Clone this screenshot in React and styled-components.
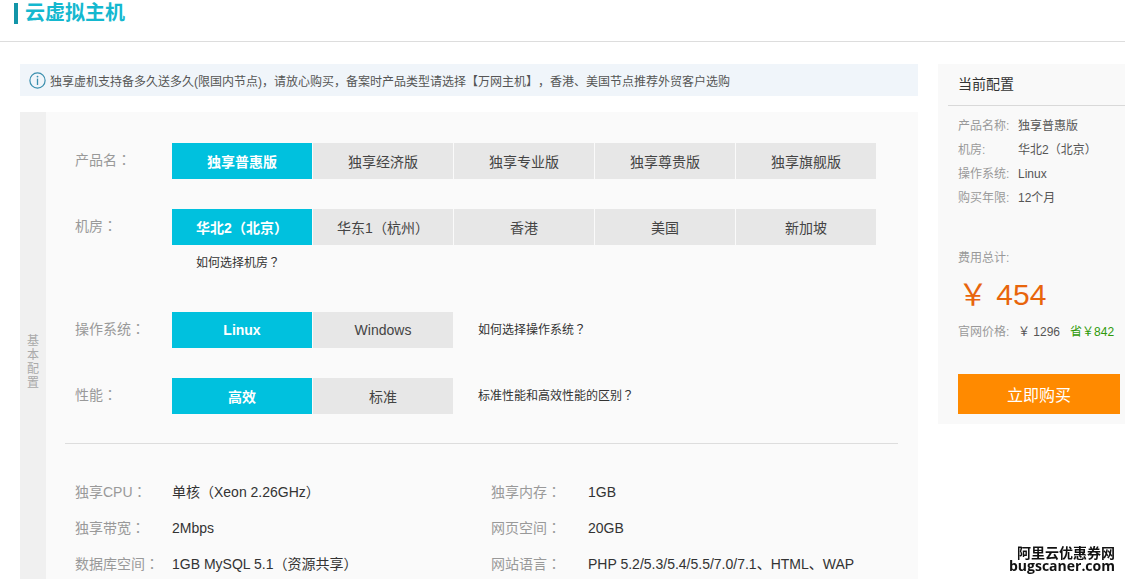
import React, { useState } from "react";
import styled, { createGlobalStyle } from "styled-components";

const GlobalStyle = createGlobalStyle`
  * {
    box-sizing: border-box;
  }

  body {
    margin: 0;
    background: #ffffff;
    color: #333333;
    font-family: "Liberation Sans", "Noto Sans CJK SC", sans-serif;
    font-size: 14px;
    text-spacing-trim: space-all;
  }

  button {
    font-family: inherit;
    cursor: pointer;
  }
`;

const Header = styled.header`
  display: flex;
  align-items: flex-start;
  height: 42px;
  padding: 3px 14px 0;
  border-bottom: 1px solid #dddddd;
`;

const Title = styled.h1`
  margin: 0;
  padding-left: 7px;
  border-left: 4px solid #1295a8;
  color: #14b8cf;
  font-size: 20px;
  font-weight: bold;
  line-height: 21px;
`;

const Page = styled.div`
  display: flex;
  align-items: flex-start;
  gap: 20px;
  padding: 22px 0 0 20px;
`;

const Main = styled.main`
  flex: 1;
  min-width: 0;
`;

const Notice = styled.div`
  display: flex;
  align-items: center;
  gap: 4px;
  height: 32px;
  margin-bottom: 16px;
  padding: 0 9px;
  background: #f0f5fa;
  color: #555555;
  font-size: 12px;
`;

const Panel = styled.section`
  display: flex;
  background: #fafafa;
`;

const Rail = styled.h2`
  display: flex;
  align-items: center;
  justify-content: center;
  width: 26px;
  margin: 0;
  padding: 0 7px;
  background: #f0f0f0;
  color: #aaaaaa;
  font-size: 12px;
  font-weight: normal;
  line-height: 14px;
`;

const PanelBody = styled.div`
  flex: 1;
  padding: 31px 20px 30px 19px;
`;

const Options = styled.div`
  display: flex;
  flex-direction: column;
  gap: 30px;
  padding: 0 10px 29px;
  border-bottom: 1px solid #dddddd;
`;

const OptionRow = styled.div`
  display: flex;
`;

const Label = styled.span`
  flex: none;
  width: ${(props) => props.$width || 97}px;
  color: #999999;
  line-height: ${(props) => props.$line || 36}px;
`;

// the TC face keeps full-width marks in the middle of their cell
const Mark = styled.span`
  font-family: "Noto Sans CJK TC", sans-serif;
  line-height: 1;
`;

const ButtonGroup = styled.div`
  display: flex;
  gap: 1px;
`;

const OptionButton = styled.button`
  width: 140px;
  height: 36px;
  padding: 0;
  border: 0;
  background: ${(props) => (props.$active ? "#00c1de" : "#e7e7e7")};
  color: ${(props) => (props.$active ? "#ffffff" : "#444444")};
  font-size: 14px;
  font-weight: ${(props) => (props.$active ? "bold" : "normal")};
`;

const HelpLink = styled.a`
  display: block;
  padding-left: ${(props) => (props.$below ? 24 : 25)}px;
  color: #333333;
  font-size: 12px;
  line-height: ${(props) => (props.$below ? 37 : 36)}px;
  text-decoration: none;
`;

const Specs = styled.dl`
  display: grid;
  grid-template-columns: 1fr 1fr;
  column-gap: 9px;
  margin: 0;
  padding: 30px 0 0 10px;
  line-height: 36px;
`;

const Spec = styled.div`
  display: flex;
`;

const Value = styled.dd`
  margin: 0;
  white-space: nowrap;
`;

const Aside = styled.aside`
  flex: none;
  width: 187px;
  padding: 0 0 10px 10px;
  background: #f9f9f9;
  font-size: 12px;
`;

const AsideTitle = styled.h2`
  margin: 0 0 8px;
  padding-left: 10px;
  border-bottom: 1px solid #d9d9d9;
  font-size: 14px;
  font-weight: normal;
  line-height: 41px;
`;

const Summary = styled.dl`
  margin: 0 0 36px;
  padding-left: 10px;
  color: #555555;
  line-height: 24px;
`;

const Cost = styled.div`
  padding: 0 5px 0 10px;
  color: #555555;
  line-height: 24px;
`;

const Muted = styled.span`
  color: #999999;
`;

const Price = styled.div`
  color: #e8650c;
  font-size: 30px;
  line-height: 50px;
`;

const OfficialPrice = styled.div`
  display: flex;
  white-space: nowrap;
`;

const Saved = styled.span`
  margin-left: 10px;
  color: #2f9a0a;
`;

const BuyButton = styled.button`
  width: 100%;
  height: 40px;
  margin-top: 30px;
  border: 0;
  background: #ff8a00;
  color: #ffffff;
  font-size: 16px;
`;

const Watermark = styled.div`
  display: flex;
  flex-direction: column;
  align-items: flex-end;
  position: fixed;
  right: 10px;
  bottom: 7px;
  color: #111111;
  font-size: 14px;
  font-weight: bold;
`;

const WatermarkName = styled.span`
  font-family: "Noto Sans CJK SC", sans-serif;
  line-height: 16px;
`;

const WatermarkSite = styled.span`
  font-family: "Open Sans", sans-serif;
  line-height: 12px;
`;

const GROUPS = [
  {
    name: "产品名",
    options: ["独享普惠版", "独享经济版", "独享专业版", "独享尊贵版", "独享旗舰版"],
  },
  {
    name: "机房",
    options: ["华北2（北京）", "华东1（杭州）", "香港", "美国", "新加坡"],
    help: "如何选择机房",
    below: true,
  },
  { name: "操作系统", options: ["Linux", "Windows"], help: "如何选择操作系统" },
  { name: "性能", options: ["高效", "标准"], help: "标准性能和高效性能的区别" },
];

const SPECS = [
  ["独享CPU", "单核（Xeon 2.26GHz）"],
  ["独享内存", "1GB"],
  ["独享带宽", "2Mbps"],
  ["网页空间", "20GB"],
  ["数据库空间", "1GB MySQL 5.1（资源共享）"],
  ["网站语言", "PHP 5.2/5.3/5.4/5.5/7.0/7.1、HTML、WAP"],
];

const InfoIcon = () => (
  <svg width="17" height="17" viewBox="0 0 17 17" fill="none" aria-hidden="true">
    <circle cx="8.5" cy="8.5" r="7.6" stroke="#3a8fae" strokeWidth="1.2" />
    <path d="M8.5 6.6v6.4" stroke="#3a8fae" strokeWidth="1.3" />
    <circle cx="8.5" cy="4.6" r="0.9" fill="#3a8fae" />
  </svg>
);

const OptionGroup = ({ group, selected, onSelect }) => {
  const help = group.help && (
    <HelpLink href="#help" $below={group.below}>
      {group.help}
      <Mark>？</Mark>
    </HelpLink>
  );
  return (
    <OptionRow role="group" aria-label={group.name}>
      <Label $line={34}>
        {group.name}
        <Mark>：</Mark>
      </Label>
      <div>
        <ButtonGroup>
          {group.options.map((option) => (
            <OptionButton
              key={option}
              type="button"
              $active={option === selected}
              aria-pressed={option === selected}
              onClick={() => onSelect(group.name, option)}
            >
              {option}
            </OptionButton>
          ))}
        </ButtonGroup>
        {group.below && help}
      </div>
      {!group.below && help}
    </OptionRow>
  );
};

const App = () => {
  const [config, setConfig] = useState({
    产品名: "独享普惠版",
    机房: "华北2（北京）",
    操作系统: "Linux",
    性能: "高效",
  });
  const onSelect = (name, option) => {
    setConfig({ ...config, [name]: option });
  };
  const summary = [
    ["产品名称:", config["产品名"]],
    ["机房:", config["机房"]],
    ["操作系统:", config["操作系统"]],
    ["购买年限:", "12个月"],
  ];

  return (
    <>
      <GlobalStyle />
      <Header>
        <Title>云虚拟主机</Title>
      </Header>
      <Page>
        <Main>
          <Notice>
            <InfoIcon />
            <span>
              独享虚机支持备多久送多久(限国内节点)，请放心购买，备案时产品类型请选择【万网主机】，香港、美国节点推荐外贸客户选购
            </span>
          </Notice>
          <Panel>
            <Rail>基本配置</Rail>
            <PanelBody>
              <Options>
                {GROUPS.map((group) => (
                  <OptionGroup
                    key={group.name}
                    group={group}
                    selected={config[group.name]}
                    onSelect={onSelect}
                  />
                ))}
              </Options>
              <Specs>
                {SPECS.map(([name, value]) => (
                  <Spec key={name}>
                    <Label as="dt">
                      {name}
                      <Mark>：</Mark>
                    </Label>
                    <Value>{value}</Value>
                  </Spec>
                ))}
              </Specs>
            </PanelBody>
          </Panel>
        </Main>
        <Aside>
          <AsideTitle>当前配置</AsideTitle>
          <Summary>
            {summary.map(([name, value]) => (
              <Spec key={name}>
                <Label as="dt" $width={60} $line={24}>
                  {name}
                </Label>
                <Value>{value}</Value>
              </Spec>
            ))}
          </Summary>
          <Cost>
            <Muted>费用总计:</Muted>
            <Price>￥ 454</Price>
            <OfficialPrice>
              <Label $width={60} $line={24}>
                官网价格:
              </Label>
              <span>￥ 1296</span>
              <Saved>省￥842</Saved>
            </OfficialPrice>
            <BuyButton type="button">立即购买</BuyButton>
          </Cost>
        </Aside>
      </Page>
      <Watermark>
        <WatermarkName>阿里云优惠券网</WatermarkName>
        <WatermarkSite>bugscaner.com</WatermarkSite>
      </Watermark>
    </>
  );
};

export default App;
